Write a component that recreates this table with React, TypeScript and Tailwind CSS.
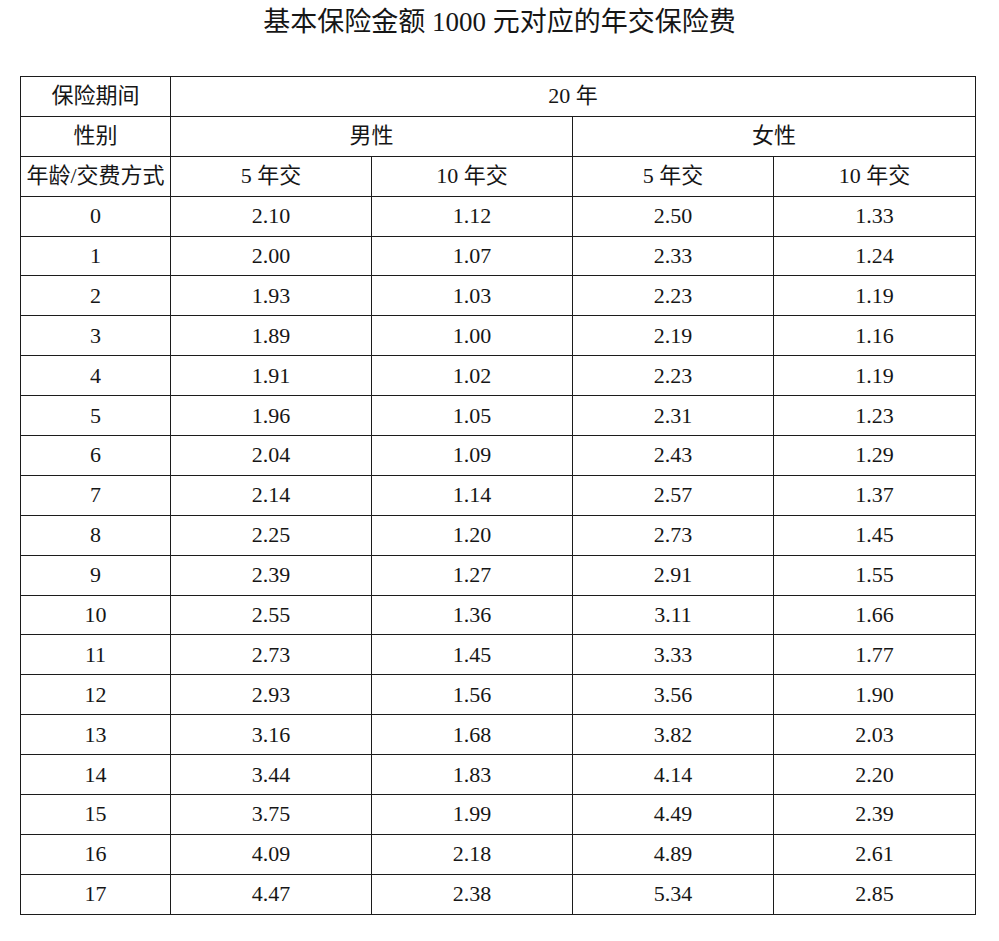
import React from 'react';

const rows: [number, string, string, string, string][] = [
  [0, '2.10', '1.12', '2.50', '1.33'],
  [1, '2.00', '1.07', '2.33', '1.24'],
  [2, '1.93', '1.03', '2.23', '1.19'],
  [3, '1.89', '1.00', '2.19', '1.16'],
  [4, '1.91', '1.02', '2.23', '1.19'],
  [5, '1.96', '1.05', '2.31', '1.23'],
  [6, '2.04', '1.09', '2.43', '1.29'],
  [7, '2.14', '1.14', '2.57', '1.37'],
  [8, '2.25', '1.20', '2.73', '1.45'],
  [9, '2.39', '1.27', '2.91', '1.55'],
  [10, '2.55', '1.36', '3.11', '1.66'],
  [11, '2.73', '1.45', '3.33', '1.77'],
  [12, '2.93', '1.56', '3.56', '1.90'],
  [13, '3.16', '1.68', '3.82', '2.03'],
  [14, '3.44', '1.83', '4.14', '2.20'],
  [15, '3.75', '1.99', '4.49', '2.39'],
  [16, '4.09', '2.18', '4.89', '2.61'],
  [17, '4.47', '2.38', '5.34', '2.85'],
];

const cell = 'border border-[#1c1c1c] p-0 text-center align-middle leading-none';

const App = () => {
  return (
    <div
      className="min-h-[941px] bg-white pt-[6px] text-[#161616]"
      style={{ fontFamily: '"Liberation Serif", "Noto Sans CJK SC", serif' }}
    >
      {/* Title */}
      <h1 className="h-[32px] text-center text-[27px] leading-[32px] font-normal">
        基本保险金额 1000 元对应的年交保险费
      </h1>

      <table className="mt-[38px] ml-[20px] w-[955px] table-fixed border-collapse text-[22px]">
        <colgroup>
          <col className="w-[150px]" />
          <col className="w-[201px]" />
          <col className="w-[201px]" />
          <col className="w-[201px]" />
          <col className="w-[202px]" />
        </colgroup>
        <tbody>
          <tr className="h-[39.9px]">
            <td className={cell}>保险期间</td>
            <td className={cell} colSpan={4}>20 年</td>
          </tr>
          <tr className="h-[39.9px]">
            <td className={cell}>性别</td>
            <td className={cell} colSpan={2}>男性</td>
            <td className={cell} colSpan={2}>女性</td>
          </tr>
          <tr className="h-[39.9px]">
            <td className={`${cell} whitespace-nowrap`}>年龄/交费方式</td>
            <td className={cell}>5 年交</td>
            <td className={cell}>10 年交</td>
            <td className={cell}>5 年交</td>
            <td className={cell}>10 年交</td>
          </tr>
          {rows.map(([age, m5, m10, f5, f10]) => (
            <tr key={age} className="h-[39.9px]">
              <td className={cell}>{age}</td>
              <td className={cell}>{m5}</td>
              <td className={cell}>{m10}</td>
              <td className={cell}>{f5}</td>
              <td className={cell}>{f10}</td>
            </tr>
          ))}
        </tbody>
      </table>
    </div>
  );
};

export default App;
